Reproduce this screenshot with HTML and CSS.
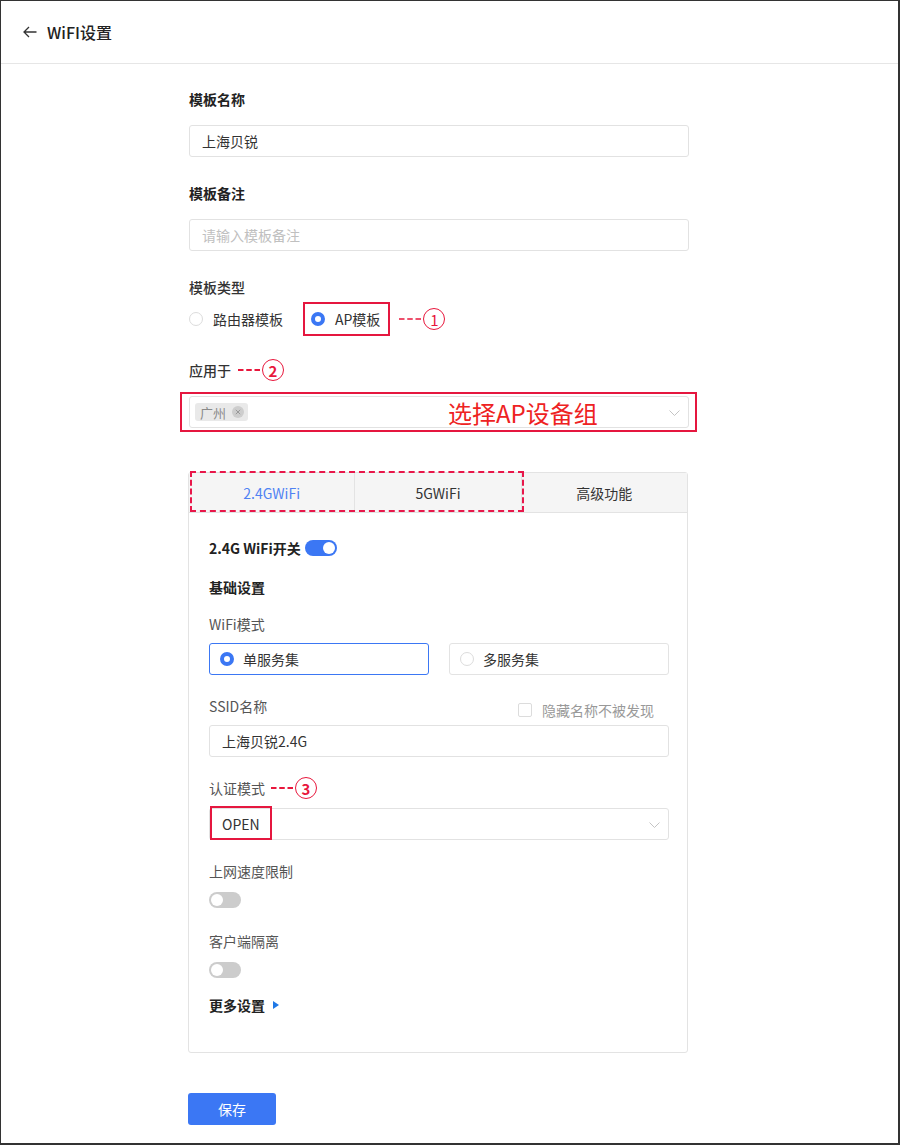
FILE: index.html
```html
<!DOCTYPE html>
<html lang="zh-CN">
<head>
<meta charset="utf-8">
<title>WiFI设置</title>
<link rel="stylesheet" href="styles.css">
</head>
<body>
<div class="frame">
  <header class="topbar">
    <svg class="back" width="14" height="12" viewBox="0 0 14 12"><path d="M13.5 6H1M6 1L1 6l5 5" fill="none" stroke="#333" stroke-width="1.3"/></svg>
    <span class="title">WiFI设置</span>
  </header>

  <main class="content">
    <div class="field">
      <div class="label strong">模板名称</div>
      <div class="input">上海贝锐</div>
    </div>

    <div class="field">
      <div class="label strong">模板备注</div>
      <div class="input placeholder">请输入模板备注</div>
    </div>

    <div class="field">
      <div class="label medium">模板类型</div>
      <div class="radio-row">
        <span class="opt"><span class="radio"></span><span>路由器模板</span></span>
        <span class="anno-box"><span class="opt"><span class="radio checked"></span><span>AP模板</span></span></span>
        <span class="anno"><svg class="dash" width="22" height="4" viewBox="0 0 22 4"><line x1="0" y1="2" x2="22" y2="2" stroke="#e8173c" stroke-width="1.6" stroke-dasharray="5.5 2.75"/></svg><span class="num thin">1</span></span>
      </div>
    </div>

    <div class="field apply">
      <div class="label medium">应用于<span class="anno"><svg class="dash" width="22" height="4" viewBox="0 0 22 4"><line x1="0" y1="2" x2="22" y2="2" stroke="#e8173c" stroke-width="2" stroke-dasharray="5.5 2.75"/></svg><span class="num">2</span></span></div>
      <div class="apply-box">
        <div class="select">
          <span class="tag">广州<svg class="tag-x" width="12" height="12" viewBox="0 0 12 12"><circle cx="6" cy="6" r="6" fill="#cdcdcd"/><path d="M3.8 3.8l4.4 4.4M8.2 3.8l-4.4 4.4" stroke="#999" stroke-width="1"/></svg></span>
          <span class="apply-note">选择AP设备组</span>
          <svg class="chev" width="11" height="6" viewBox="0 0 11 6"><path d="M0.5 0.5l5 5 5-5" fill="none" stroke="#c4c4c4" stroke-width="1"/></svg>
        </div>
      </div>
    </div>

    <section class="card">
      <div class="tabs">
        <div class="tab active">2.4GWiFi</div>
        <div class="tab">5GWiFi</div>
        <div class="tab">高级功能</div>
      </div>
      <div class="tab-mark"></div>

      <div class="card-body">
        <div class="switch-row">
          <span class="strong">2.4G WiFi开关</span>
          <span class="toggle on"></span>
        </div>

        <div class="section-title strong">基础设置</div>

        <div class="sub-label">WiFi模式</div>
        <div class="mode-grid">
          <div class="mode-box selected"><span class="radio checked"></span><span>单服务集</span></div>
          <div class="mode-box"><span class="radio"></span><span>多服务集</span></div>
        </div>

        <div class="sub-label split">
          <span>SSID名称</span>
          <span class="hide-opt"><span class="checkbox"></span><span>隐藏名称不被发现</span></span>
        </div>
        <div class="input inner">上海贝锐2.4G</div>

        <div class="sub-label">认证模式<span class="anno"><svg class="dash" width="22" height="4" viewBox="0 0 22 4"><line x1="0" y1="2" x2="22" y2="2" stroke="#e8173c" stroke-width="2" stroke-dasharray="5.5 2.75"/></svg><span class="num">3</span></span></div>
        <div class="select auth">
          <span class="open-text">OPEN</span>
          <span class="open-mark"></span>
          <svg class="chev" width="11" height="6" viewBox="0 0 11 6"><path d="M0.5 0.5l5 5 5-5" fill="none" stroke="#c4c4c4" stroke-width="1"/></svg>
        </div>

        <div class="sub-label">上网速度限制</div>
        <div class="toggle-line"><span class="toggle"></span></div>

        <div class="sub-label">客户端隔离</div>
        <div class="toggle-line"><span class="toggle"></span></div>

        <div class="more strong">更多设置<span class="tri"></span></div>
      </div>
    </section>

    <button class="save">保存</button>
  </main>
</div>
</body>
</html>
```

FILE: styles.css
```css
* { box-sizing: border-box; }
html, body { margin: 0; padding: 0; background: #fff; }
body {
  font-family: "Noto Sans CJK SC", "Noto Sans", sans-serif;
  font-size: 14px;
  color: #333;
}
.frame {
  width: 900px;
  height: 1145px;
  border-style: solid;
  border-color: #333;
  border-width: 1px 2px 2px 1px;
  overflow: hidden;
  background: #fff;
}
.topbar {
  height: 63px;
  border-bottom: 1px solid #e6e6e6;
  display: flex;
  align-items: center;
  padding-left: 22px;
}
.back { margin-right: 10px; }
.title { font-size: 16px; font-weight: 500; color: #222; }

.content { padding: 24px 0 0 188px; }

.strong { font-weight: 700; color: #222; }
.medium { font-weight: 500; color: #333; }

.field { width: 500px; }
.field + .field { margin-top: 25px; }
.field.apply { margin-top: 23px; }
.label { line-height: 22px; display: flex; align-items: center; }
.label + .input { margin-top: 15px; }

.input {
  height: 32px;
  border: 1px solid #e2e2e2;
  border-radius: 3px;
  padding: 0 12px;
  display: flex;
  align-items: center;
  color: #333;
}
.input.placeholder { color: #c0c0c0; }

.radio-row {
  margin-top: 4px;
  height: 34px;
  display: flex;
  align-items: center;
}
.opt { display: inline-flex; align-items: center; gap: 10px; color: #333; }
.radio {
  width: 14px;
  height: 14px;
  border-radius: 50%;
  border: 1px solid #dcdcdc;
  background: #fff;
  flex: none;
}
.radio.checked {
  border: 4px solid #3b77f4;
  background: #fff;
}
.anno-box {
  margin-left: 20px;
  height: 34px;
  border: 2px solid #e5173f;
  padding: 0 8px 0 6px;
  display: inline-flex;
  align-items: center;
}
.anno { display: inline-flex; align-items: center; margin-left: 9px; }
.label .anno { margin-left: 7px; }
.sub-label .anno { margin-left: 6px; }
.dash { display: block; margin-right: 2px; }
.num {
  width: 22px;
  height: 22px;
  border-radius: 50%;
  border: 1.3px solid #e8173c;
  color: #e8173c;
  font-size: 15px;
  font-weight: 700;
  display: inline-flex;
  align-items: center;
  justify-content: center;
  line-height: 1;
}
.num.thin { font-weight: 400; }

.apply-box {
  margin: 11px 0 0 -9px;
  width: 517px;
  border: 2px solid #e5173f;
  padding: 2px 6px 2px 7px;
}
.select {
  position: relative;
  height: 32px;
  border: 1px solid #e2e2e2;
  border-radius: 3px;
  display: flex;
  align-items: center;
  padding-left: 5px;
}
.tag {
  height: 18px;
  background: #e9e9e9;
  border-radius: 3px;
  padding: 0 4px 0 5px;
  display: inline-flex;
  align-items: center;
  gap: 6px;
  color: #8a8a8a;
  font-size: 13px;
}
.apply-note {
  position: absolute;
  left: 258px;
  top: 0;
  line-height: 32px;
  font-size: 24px;
  color: #ee2222;
}
.chev { position: absolute; right: 8px; top: 13px; }

.card {
  position: relative;
  margin: 40px 0 0 -1px;
  width: 500px;
  border: 1px solid #e3e3e3;
  border-radius: 3px;
}
.tabs {
  display: flex;
  height: 40px;
  background: #f5f5f5;
  border-bottom: 1px solid #e3e3e3;
}
.tab {
  flex: 1;
  display: flex;
  align-items: center;
  justify-content: center;
  color: #333;
}
.tab + .tab { border-left: 1px solid #e3e3e3; }
.tab.active { color: #4f82f3; }
.tab-mark {
  position: absolute;
  left: 1px;
  top: -2px;
  width: 334px;
  height: 41px;
  border: 2px dashed #e8174a;
}

.card-body { padding: 24px 18px 36px 20px; }
.switch-row { display: flex; align-items: center; gap: 4px; line-height: 22px; }
.toggle {
  display: inline-block;
  position: relative;
  width: 32px;
  height: 16px;
  border-radius: 8px;
  background: #cccccc;
}
.toggle::after {
  content: "";
  position: absolute;
  top: 2px;
  left: 2px;
  width: 12px;
  height: 12px;
  border-radius: 50%;
  background: #fff;
}
.toggle.on { background: #3b77f4; }
.toggle.on::after { left: 18px; }

.section-title { margin-top: 17px; line-height: 22px; }
.sub-label {
  margin-top: 15px;
  line-height: 22px;
  color: #555;
  display: flex;
  align-items: center;
}
.mode-grid + .sub-label,
.input.inner + .sub-label,
.select.auth + .sub-label { margin-top: 20px; }
.toggle-line + .sub-label { margin-top: 22px; }
.sub-label.split {
  justify-content: space-between;
  align-items: flex-start;
  height: 22px;
  padding-right: 15px;
}
.hide-opt {
  display: inline-flex;
  align-items: center;
  gap: 10px;
  color: #999;
  margin-top: 4px;
  line-height: 22px;
}
.checkbox {
  width: 14px;
  height: 14px;
  border: 1px solid #dcdcdc;
  border-radius: 2px;
  background: #fff;
}

.mode-grid {
  margin-top: 8px;
  display: grid;
  grid-template-columns: 1fr 1fr;
  gap: 20px;
}
.mode-box {
  height: 32px;
  border: 1px solid #e3e3e3;
  border-radius: 3px;
  display: flex;
  align-items: center;
  gap: 9px;
  padding-left: 10px;
  color: #333;
}
.mode-box.selected { border-color: #3b77f4; }

.input.inner { margin-top: 8px; }
.select.auth { margin-top: 9px; padding-left: 12px; }
.open-text { color: #333; }
.open-mark {
  position: absolute;
  left: 0;
  top: -3px;
  width: 62px;
  height: 34px;
  border: 2px solid #e5173f;
}

.toggle-line { margin-top: 10px; height: 16px; display: flex; }
.more {
  margin-top: 16px;
  line-height: 22px;
  display: flex;
  align-items: center;
}
.tri {
  margin-left: 8px;
  width: 0;
  height: 0;
  border-left: 6px solid #1f78e6;
  border-top: 4px solid transparent;
  border-bottom: 4px solid transparent;
}

.save {
  display: block;
  margin: 40px 0 0 -1px;
  width: 88px;
  height: 32px;
  border: none;
  border-radius: 3px;
  background: #3b77f4;
  color: #fff;
  font-family: inherit;
  font-size: 14px;
  padding: 0;
}
```
